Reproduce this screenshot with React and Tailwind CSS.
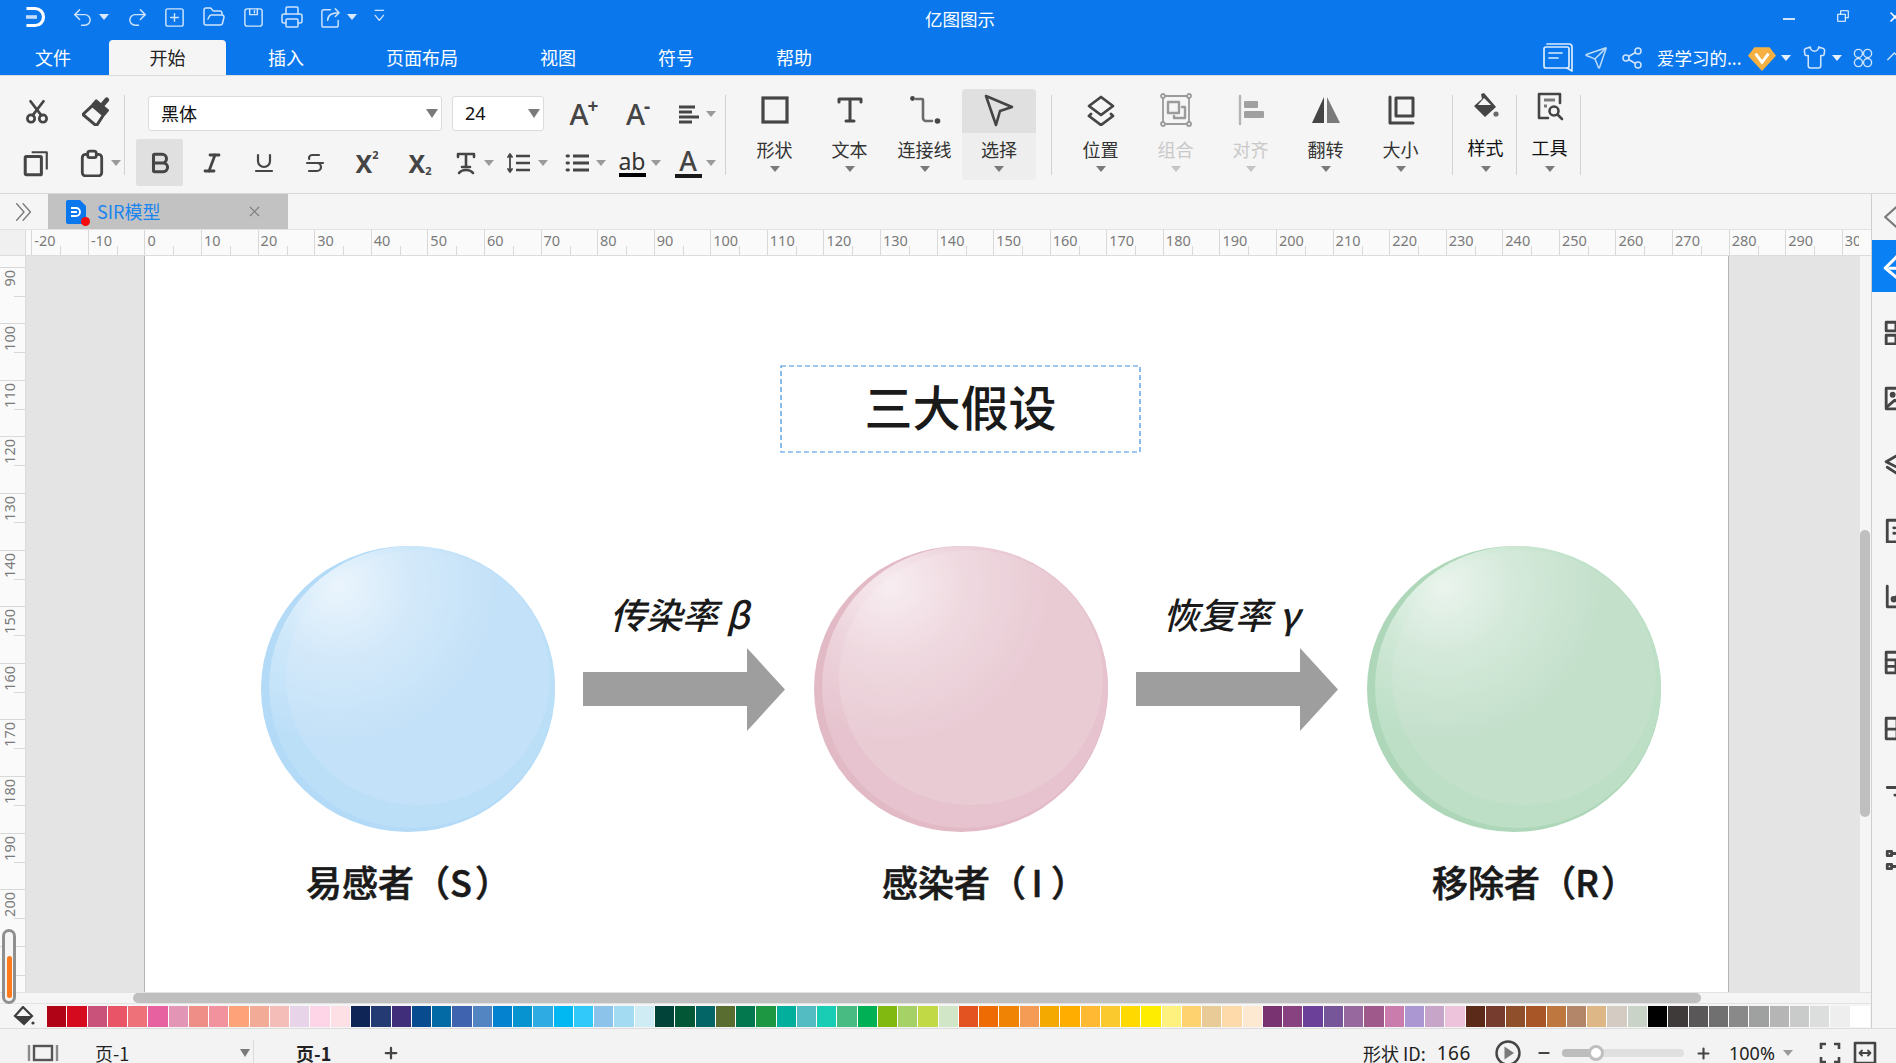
import React from "react";
import { Undo2, Redo2, SquarePlus, FolderOpen, Printer, Send, Share2, Shirt, Bold, Italic, Underline, Strikethrough, X, Plus, Minus } from "lucide-react";

const PALETTE = ["#b10316","#d60a1e","#c8527a","#e95566","#ee7078","#e761a0","#e295b5","#ef8e87","#f2929f","#fea27a","#f2ab96","#f5bdb8","#e8d4e8","#fdd5e6","#fce0e6","#0f2556","#233a72","#402e7a","#094b8f","#046aa5","#3f63ae","#5485c3","#0481cf","#0693d0","#2eabe2","#02b8f2","#31c9f9","#8bc3ea","#a2dbf2","#cfecf5","#024339","#025736","#036566","#586d2f","#03784e","#1e9743","#02ae9c","#52bcc2","#18cdb4","#47bb82","#00b054","#81b911","#a6d166","#c0d945","#d0e6c6","#e35321","#ed6b02","#f08204","#f49b55","#f3a900","#ffae00","#ffb932","#f9c92e","#ffd900","#ffed00","#fef17e","#fdd26f","#e9cb98","#fedaaa","#fde9d2","#7a3371","#87427f","#6a4098","#775599","#96689d","#9f5a8b","#ca7cad","#ab97d2","#c6a5c9","#ecc3db","#5c2a19","#763d2e","#8f4f2a","#a85627","#bd773f","#b38669","#ddb786","#d4cbc3","#c9d3c8","#000000","#3e3a39","#595757","#717071","#898989","#9fa0a0","#b5b5b5","#c9caca","#dcdddd","#eeeeef","#ffffff"];

const H_TICKS = [-20,-10,0,10,20,30,40,50,60,70,80,90,100,110,120,130,140,150,160,170,180,190,200,210,220,230,240,250,260,270,280,290,300];
const V_TICKS = [90,100,110,120,130,140,150,160,170,180,190,200,210];

const S = ({ children, w = 24, h = 24, vb = "0 0 24 24", c = "#454545", sw = 2, className = "" }) => (
  <svg width={w} height={h} viewBox={vb} fill="none" stroke={c} strokeWidth={sw} strokeLinecap="round" strokeLinejoin="round" className={`block shrink-0 ${className}`}>{children}</svg>
);

const Caret = ({ c = "#7a7a7a", className = "" }) => (
  <svg width="10" height="6" viewBox="0 0 10 6" className={`block shrink-0 ${className}`}><path d="M0 0h10L5 6z" fill={c} /></svg>
);

const Logo = () => (
  <S w={24} h={24} c="#fff" sw={3.2}><path d="M2.5 3.5h8.500a8.500 8.500 0 0 1 0 17H2.500" strokeLinecap="butt" /><path d="M2 12h11" strokeOpacity=".75" strokeWidth="3.6" strokeLinecap="butt" /></S>
);

function Big({ label, disabled, children, tall, active, w = "w-[75px]" }) {
  return (
    <div className={`${w} shrink-0 flex flex-col items-center ${tall ? "pl-[2px]" : ""}`}>
      <div className={`w-full h-[44px] flex items-center justify-center rounded-t-sm ${active ? "bg-[#e0e0e0]" : ""} ${tall ? "pb-[10px]" : "pb-[3px]"}`}>{children}</div>
      <div className={`w-full h-[47px] flex flex-col items-center rounded-b-sm ${active ? "bg-[#eeeeee]" : ""} ${tall ? "-mt-[8px]" : ""}`}>
        <div className={`${tall ? "mt-[10px] text-[#111111]" : "mt-[4px]"} h-[24px] leading-[24px] text-[18px] whitespace-nowrap ${disabled ? "text-[#c9c9c9]" : tall ? "" : "text-[#333333]"}`}>{label}</div>
        <div className={`${tall ? "mt-[7px]" : "mt-[5px]"}`}><Caret c={disabled ? "#c4c4c4" : "#7a7a7a"} /></div>
      </div>
    </div>
  );
}

const Sep = () => <div className="w-px h-[80px] mt-[19px] bg-[#d2d2d2] shrink-0" />;

function Sphere({ id, outer, mid, center, className }) {
  return (
    <svg viewBox="0 0 294 286" width="294" height="286" className={`absolute top-[290px] ${className}`}>
      <defs>
        <radialGradient id={id} cx="0.24" cy="0.14" r="0.56">
          <stop offset="0" stopColor="#ffffff" stopOpacity=".66" />
          <stop offset="0.45" stopColor="#ffffff" stopOpacity=".28" />
          <stop offset="1" stopColor="#ffffff" stopOpacity="0" />
        </radialGradient>
      </defs>
      <ellipse cx="147" cy="143" rx="147" ry="143" fill={outer} />
      <ellipse cx="151" cy="141" rx="143" ry="141" fill={mid} />
      <ellipse cx="157" cy="131.500" rx="132" ry="127.500" fill={center} />
      <ellipse cx="151" cy="141" rx="143" ry="141" fill={`url(#${id})`} />
    </svg>
  );
}

const Arrow = ({ className }) => (
  <svg viewBox="0 0 202 83" width="202" height="83" className={`absolute top-[392px] ${className}`}>
    <path d="M0 24h164V0l38 41.500L164 83V58H0z" fill="#9d9e9d" />
  </svg>
);

const SidebarIcon = ({ children }) => (
  <div className="h-[66px] flex items-center pl-[12px] overflow-hidden"><S w={26} h={26} sw={2.6}>{children}</S></div>
);

export default function App() {
  return (
    <div className="w-[1896px] h-[1063px] overflow-hidden flex flex-col bg-[#f5f5f5] font-['Noto_Sans_CJK_SC','Noto_Sans',sans-serif] text-[#222]">
      {/* title + menu */}
      <header className="h-[76px] shrink-0 bg-[#0a78ec] border-b border-[#dcdcdc] text-white">
        <div className="h-[40px] flex items-center">
          <div className="w-[924px] shrink-0 flex items-center pb-[6px]">
            <div className="ml-[24px]"><Logo /></div>
            <Undo2 size={23} strokeWidth={1.5} className="ml-[23px] text-[#cfe4fb]" />
            <Caret c="#d8e9fc" className="ml-[5px]" />
            <Redo2 size={23} strokeWidth={1.5} className="ml-[17px] text-[#cfe4fb]" />
            <SquarePlus size={23} strokeWidth={1.5} className="ml-[14px] text-[#cfe4fb]" />
            <FolderOpen size={24} strokeWidth={1.5} className="ml-[16px] text-[#cfe4fb]" />
            <div className="ml-[16px]"><S w={23} h={23} c="#cfe4fb" sw={1.5}><rect x="3" y="3" width="18" height="18" rx="2.500" /><path d="M8 3v6h8V3M13 5v2" /></S></div>
            <Printer size={24} strokeWidth={1.5} className="ml-[15px] text-[#cfe4fb]" />
            <div className="ml-[15px]"><S w={23} h={23} c="#cfe4fb" sw={1.5}><path d="M12 4H5a2 2 0 0 0-2 2v14a2 2 0 0 0 2 2h13a2 2 0 0 0 2-2v-5" /><path d="M9 15c0-5 4-8 12-8M17 3l4 4-4 4" /></S></div>
            <Caret c="#d8e9fc" className="ml-[5px]" />
            <div className="ml-[14px]"><S w={20} h={20} c="#cfe4fb" sw={1.6}><path d="M5 4h10M5 10l5 6 5-6" /></S></div>
          </div>
          <div className="w-[72px] shrink-0 text-[17.5px] leading-[24px] text-center whitespace-nowrap -mt-[2px]">亿图图示</div>
          <div className="ml-[787px] w-[12px] h-[2px] bg-[#cfe4fb] mt-[-2px] shrink-0" />
          <div className="ml-[41px] -mt-[9px]"><S w={14} h={14} c="#ffffff" sw={1.8}><rect x="3" y="9" width="13" height="12" /><path d="M8 9V3h13v12h-5" /></S></div>
          <X size={16} strokeWidth={2.4} className="ml-[37px] -mt-[7px] shrink-0" />
        </div>
        <nav className="h-[35px] flex items-center text-[18px] leading-[35px]">
          <div className="w-[109px] pr-[3px] text-center shrink-0">文件</div>
          <div className="w-[117px] h-[35px] bg-[#f5f5f5] text-[#222] text-center rounded-t-sm shrink-0">开始</div>
          <div className="w-[120px] text-center shrink-0">插入</div>
          <div className="w-[152px] text-center shrink-0">页面布局</div>
          <div className="w-[120px] text-center shrink-0">视图</div>
          <div className="w-[116px] text-center shrink-0">符号</div>
          <div className="w-[120px] text-center shrink-0">帮助</div>
          <div className="ml-[688px] shrink-0"><S w={31} h={30} c="#dcebfd" sw={1.7} vb="0 0 31 30"><path d="M2 6a2 2 0 0 1 2-2h21a2 2 0 0 1 2 2v17a2 2 0 0 1-2 2H4a2 2 0 0 1-2-2z" /><path d="M5 1h22a3 3 0 0 1 3 3v24l-5-3" /><path d="M7 10h13M7 15h9" /></S></div>
          <Send size={24} strokeWidth={1.5} className="ml-[11px] text-[#bcdafa] shrink-0" />
          <Share2 size={24} strokeWidth={1.5} className="ml-[12px] text-[#cfe4fb] shrink-0" />
          <div className="ml-[13px] w-[87px] shrink-0 whitespace-nowrap overflow-hidden text-[17.5px]">爱学习的...</div>
          <div className="ml-[4px] shrink-0">
            <svg width="28" height="28" viewBox="0 0 26 26" className="block"><path d="M6 3h14l6 8-13 14L0 11z" fill="#f5b041" /><path d="M7 9l6 8 6-8" fill="none" stroke="#fff" strokeWidth="2.600" /></svg>
          </div>
          <Caret c="#e4f0fd" className="ml-[5px]" />
          <Shirt size={25} strokeWidth={1.5} className="ml-[11px] text-[#cfe4fb] shrink-0" />
          <Caret c="#e4f0fd" className="ml-[5px]" />
          <div className="ml-[10px] shrink-0"><S w={22} h={24} c="#cfe4fb" sw={1.5}><circle cx="7" cy="7" r="4.400" /><circle cx="17" cy="7" r="4.400" /><circle cx="7" cy="17" r="4.400" /><circle cx="17" cy="17" r="4.400" /></S></div>
          <div className="ml-[12px] shrink-0"><S w={20} h={20} c="#cfe4fb" sw={1.6}><path d="M2 14l8-8 8 8" /></S></div>
        </nav>
      </header>

      {/* ribbon */}
      <section className="h-[118px] shrink-0 border-b border-[#d8d8d8] flex items-start">
        <div className="w-[124px] shrink-0 pt-[20px]">
          <div className="h-[35px] flex items-center pl-[22px] pb-[6px]">
            <div className="w-[30px] flex justify-center"><S w={26} h={26} sw={2.500}><circle cx="6.500" cy="19" r="3.400" /><circle cx="17.500" cy="19" r="3.400" /><path d="M8 16L18 3M16 16L6 3" /></S></div>
            <div className="ml-[30px] w-[30px] flex justify-center">
              <svg width="30" height="30" viewBox="0 0 28 28" className="block">
                <g transform="rotate(40 14 14)">
                  <rect x="12" y="-2" width="4.500" height="9" rx="2" fill="#454545" />
                  <rect x="6" y="6" width="16.500" height="7" rx="1" fill="#454545" />
                  <path d="M7.500 13h13.500l1.500 12H6z" fill="#f5f5f5" stroke="#454545" strokeWidth="2.800" strokeLinejoin="round" />
                </g>
              </svg>
            </div>
          </div>
          <div className="mt-[8px] h-[47px] flex items-center pl-[21px]">
            <div className="w-[30px] flex justify-center"><S w={26} h={28} sw={2.800} vb="0 0 24 26"><rect x="2" y="7" width="15" height="17" rx="1" /><path d="M8 3h14v16" strokeWidth="2" strokeLinecap="butt" /></S></div>
            <div className="ml-[26px] w-[30px] flex justify-center"><S w={26} h={28} sw={2.600} vb="0 0 24 26"><rect x="3" y="5" width="18" height="20" rx="3" /><rect x="8" y="2" width="8" height="6" rx="2" fill="#f5f5f5" /></S></div>
            <Caret c="#9a9a9a" className="ml-[4px]" />
          </div>
        </div>
        <Sep />
        <div className="w-[600px] shrink-0 pt-[20px]">
          <div className="h-[35px] flex items-center">
            <div className="ml-[23px] w-[294px] h-[35px] bg-white border border-[#dcdcdc] rounded-[3px] flex items-center justify-between pl-[12px] pr-[3px] shrink-0">
              <span className="text-[18px] text-[#111]">黑体</span><svg width="12" height="9" viewBox="0 0 12 9" className="block"><path d="M0 0h12L6 9z" fill="#7a7a7a" /></svg>
            </div>
            <div className="ml-[10px] w-[92px] h-[35px] bg-white border border-[#dcdcdc] rounded-[3px] flex items-center justify-between pl-[12px] pr-[3px] shrink-0">
              <span className="text-[18px] text-[#111] font-['Noto_Sans',sans-serif]">24</span><svg width="12" height="9" viewBox="0 0 12 9" className="block"><path d="M0 0h12L6 9z" fill="#7a7a7a" /></svg>
            </div>
            <div className="ml-[20px] w-[40px] flex justify-center items-start text-[#454545] font-['Noto_Sans',sans-serif] font-medium"><span className="text-[29px] leading-[34px]">A</span><span className="text-[19px] leading-[18px] font-bold -ml-[1px]">+</span></div>
            <div className="ml-[14px] w-[40px] flex justify-center items-start text-[#454545] font-['Noto_Sans',sans-serif] font-medium"><span className="text-[29px] leading-[34px]">A</span><span className="text-[19px] leading-[18px] font-bold -ml-[1px]">-</span></div>
            <div className="ml-[17px]"><S w={26} h={24} sw={3}><path d="M3 5h16M3 10h13M3 15h20M3 20h13" strokeLinecap="butt" /></S></div>
            <Caret c="#9a9a9a" className="ml-[5px]" />
          </div>
          <div className="mt-[8px] h-[47px] flex items-center">
            <div className="ml-[11px] w-[47px] h-[47px] bg-[#e0e0e0] rounded-[2px] flex items-center justify-center shrink-0"><Bold size={26} strokeWidth={2.8} className="text-[#454545]" /></div>
            <div className="ml-[3px] w-[52px] flex justify-center"><Italic size={24} strokeWidth={2.8} className="text-[#454545]" /></div>
            <div className="w-[52px] flex justify-center"><Underline size={24} strokeWidth={2.2} className="text-[#454545]" /></div>
            <div className="w-[50px] flex justify-center"><Strikethrough size={24} strokeWidth={2.2} className="text-[#454545]" /></div>
            <div className="ml-[1px] w-[52px] flex justify-center items-start text-[#454545] font-['Noto_Sans',sans-serif] font-bold"><span className="text-[25px] leading-[30px]">X</span><span className="text-[11px] leading-[14px]">2</span></div>
            <div className="ml-[1px] w-[52px] flex justify-center items-end text-[#454545] font-['Noto_Sans',sans-serif] font-bold"><span className="text-[25px] leading-[30px]">X</span><span className="text-[11px] leading-[14px]">2</span></div>
            <div className="ml-[8px]"><S w={24} h={24} sw={2.6}><path d="M4 6V3h16v3M12 3v13M8 16h8M5 22c3-4 11-4 14 0" /></S></div>
            <Caret c="#9a9a9a" className="ml-[6px]" />
            <div className="ml-[12px]"><S w={26} h={24} sw={2.6} vb="0 0 26 24"><path d="M10 5h14M10 12h14M10 19h14" strokeLinecap="butt" /><path d="M4 4v16M2 6l2-3 2 3M2 18l2 3 2-3" strokeWidth="1.8" /></S></div>
            <Caret c="#9a9a9a" className="ml-[6px]" />
            <div className="ml-[17px]"><S w={26} h={24} sw={2.8} vb="0 0 26 24"><path d="M8 5h16M8 12h16M8 19h16" strokeLinecap="butt" /><path d="M2 5h1.500M2 12h1.500M2 19h1.500" /></S></div>
            <Caret c="#9a9a9a" className="ml-[5px]" />
            <div className="ml-[11px] w-[30px] flex flex-col items-center text-[#333] font-['Noto_Sans',sans-serif]"><span className="text-[23px] leading-[24px]">ab</span><span className="w-[27px] h-[4px] bg-black" /></div>
            <Caret c="#9a9a9a" className="ml-[4px]" />
            <div className="ml-[13px] w-[28px] flex flex-col items-center text-[#454545] font-['Noto_Sans',sans-serif]"><span className="text-[27px] leading-[26px] font-medium">A</span><span className="w-[27px] h-[4px] bg-[#1a1a1a]" /></div>
            <Caret c="#9a9a9a" className="ml-[4px]" />
          </div>
        </div>
        <Sep />
        <div className="flex pt-[13px] ml-[11px]">
          <Big label="形状"><S w={30} h={30} sw={3.2} vb="0 0 30 30"><rect x="3" y="3" width="24" height="24" strokeLinejoin="miter" /></S></Big>
          <Big label="文本"><S w={28} h={30} sw={3} vb="0 0 28 30"><path d="M3 7V4h22v3M14 4v22M10 26h8" /></S></Big>
          <Big label="连接线"><S w={32} h={30} sw={2.6} vb="0 0 32 30"><circle cx="3.500" cy="3.500" r="2.400" fill="#454545" stroke="none" /><circle cx="28.500" cy="26" r="2.800" fill="#454545" stroke="none" /><path d="M7 4h6a1 1 0 0 1 1 1v18a3 3 0 0 0 3 3h6" stroke="#6b6b6b" /></S></Big>
          <Big label="选择" active w="w-[74px]"><S w={30} h={34} sw={2.6} vb="0 0 30 34"><path d="M2 3l26 11-12 4-4 14z" /></S></Big>
        </div>
        <div className="ml-[15px] shrink-0 flex"><Sep /></div>
        <div className="flex pt-[13px] ml-[11px]">
          <Big label="位置"><S w={32} h={32} sw={2.8} vb="0 0 32 32"><path d="M16 3l12 9-12 9-12-9z" /><path d="M6 20l-2 2 12 9 12-9-2-2" /></S></Big>
          <Big label="组合" disabled><S w={32} h={34} sw={1.8} c="#9b9b9b" vb="0 0 32 34"><rect x="3" y="3" width="26" height="28" /><circle cx="3" cy="3" r="2" fill="#f5f5f5" /><circle cx="29" cy="3" r="2" fill="#f5f5f5" /><circle cx="3" cy="31" r="2" fill="#f5f5f5" /><circle cx="29" cy="31" r="2" fill="#f5f5f5" /><rect x="8" y="9" width="11" height="11" strokeWidth="2.400" /><path d="M22 14h3v11H14v-2" strokeWidth="2.400" /></S></Big>
          <Big label="对齐" disabled><S w={28} h={32} c="#b5b5b5" vb="0 0 28 32" sw={2.4}><path d="M3 2v28" /><rect x="7" y="7" width="14" height="7" fill="#a0a0a0" stroke="none" rx="1" /><rect x="7" y="17" width="20" height="7" fill="#a0a0a0" stroke="none" rx="1" /></S></Big>
          <Big label="翻转"><svg width="30" height="30" viewBox="0 0 30 30" className="block"><path d="M13 2v26H1z" fill="#454545" /><path d="M16 2l13 26H16z" fill="#7a7a7a" /></svg></Big>
          <Big label="大小"><S w={28} h={30} sw={3} vb="0 0 28 30"><path d="M3 2v26h23" /><rect x="9" y="3" width="17" height="18" /></S></Big>
        </div>
        <div className="ml-[14px] shrink-0 flex"><Sep /></div>
        <div className="flex pt-[13px]">
          <Big label="样式" tall w="w-[63px]"><svg width="26" height="26" viewBox="0 0 26 26" className="block"><path d="M8 1l3-1 12 14-11 10L1 13 9 6z" fill="#454545" /><path d="M6 13h13l-7 7z" fill="#454545" /><path d="M5 12L11 5l7 7z" fill="#f5f5f5" /><circle cx="23" cy="21" r="2.600" fill="#6b6b6b" /></svg></Big>
        </div>
        <Sep />
        <div className="flex pt-[13px]">
          <Big label="工具" tall w="w-[63px]"><S w={28} h={30} sw={2.6} vb="0 0 28 30"><path d="M24 12V3H3v24h9" /><path d="M8 9h11" stroke="#7a7a7a" strokeWidth="3" strokeLinecap="butt" /><path d="M8 15h3" stroke="#7a7a7a" strokeWidth="3" strokeLinecap="butt" /><circle cx="18" cy="20" r="4.500" /><path d="M22 24l4 4" /></S></Big>
        </div>
        <Sep />
      </section>

      {/* main */}
      <main className="flex-1 min-h-0 flex">
        <div className="w-[1871px] shrink-0 flex flex-col relative">
          <div className="h-[36px] shrink-0 flex items-stretch border-b border-[#e2e2e2]">
            <div className="w-[48px] flex items-center justify-center"><S w={22} h={22} c="#7c7c7c" sw={1.5}><path d="M4 3l8 9-8 9M11 3l8 9-8 9" /></S></div>
            <div className="w-[240px] bg-[#c2c2c2] flex items-center">
              <div className="ml-[18px] relative w-[20px] h-[24px] shrink-0">
                <svg width="20" height="24" viewBox="0 0 20 24" className="block"><path d="M2 0h12l6 6v16a2 2 0 0 1-2 2H2a2 2 0 0 1-2-2V2a2 2 0 0 1 2-2z" fill="#0a78ec" /><path d="M5 8h5a4 4 0 0 1 0 8H5M5 12h6" fill="none" stroke="#fff" strokeWidth="1.8" /></svg>
                <span className="absolute -right-[4px] bottom-[-2px] w-[9px] h-[9px] rounded-full bg-[#f50b0b]" />
              </div>
              <span className="ml-[11px] text-[18px] text-[#1a84f0] whitespace-nowrap">SIR模型</span>
              <X size={17} strokeWidth={1.5} className="ml-[86px] text-[#7d7d7d]" />
            </div>
          </div>
          <div className="h-[26px] shrink-0 flex bg-[#fafafa] border-b border-[#dcdcdc] overflow-hidden">
            <div className="w-[26px] shrink-0 bg-[#f0f0f0] border-r border-[#dcdcdc]" />
            <div className="w-[5.3px] shrink-0" />
            <div className="w-[1828px] flex overflow-hidden">
              {H_TICKS.map((t) => (
                <div key={t} className="w-[56.58px] shrink-0 relative border-l border-[#d8d8d8] overflow-hidden pl-[2px] text-[14.5px] leading-[20px] text-[#7a7a7a] font-['Noto_Sans',sans-serif]">
                  {t}
                  <span className="absolute left-[28px] bottom-0 w-px h-[9px] bg-[#d8d8d8]" />
                </div>
              ))}
            </div>
          </div>
          <div className="flex-1 min-h-0 flex">
            <div className="w-[26px] shrink-0 bg-[#fafafa] border-r border-[#dcdcdc] overflow-hidden">
              <div className="h-[10.7px]" />
              {V_TICKS.map((t) => (
                <div key={t} className="h-[56.6px] relative border-t border-[#d8d8d8]">
                  <span className="absolute left-[2px] top-[2px] [writing-mode:vertical-rl] rotate-180 text-[14.5px] leading-[14px] text-[#7a7a7a] font-['Noto_Sans',sans-serif]">{t}</span>
                  <span className="absolute right-0 top-[28px] w-[11px] h-px bg-[#d8d8d8]" />
                </div>
              ))}
            </div>
            <div className="w-[119px] shrink-0 bg-[#e4e4e4] border-r border-[#b4b4b4]" />
            <div className="w-[1584px] shrink-0 bg-white relative border-r border-[#b4b4b4] text-[#1a1a1a]">
              <div className="absolute left-[635px] top-[109px] w-[361px] h-[88px] flex items-center justify-center text-[48px] leading-none font-medium pb-[8px]">
                <svg width="361" height="88" viewBox="0 0 361 88" className="absolute inset-0"><rect x="1" y="1" width="359" height="86" fill="none" stroke="#4090e0" strokeWidth="1.200" strokeDasharray="5 3" /></svg>
                <span className="relative">三大假设</span>
              </div>
              <Sphere id="gb" outer="#b3daf7" mid="#bcdff8" center="#c3e1f8" className="left-[116px]" />
              <Sphere id="gp" outer="#e2bac6" mid="#e6c3ce" center="#e9cbd4" className="left-[669px]" />
              <Sphere id="gg" outer="#aed7b9" mid="#bcdfc6" center="#c3e0cb" className="left-[1222px]" />
              <Arrow className="left-[438px]" />
              <Arrow className="left-[991px]" />
              <div className="absolute left-[465px] top-[331px] text-[36px] leading-[52px] italic font-medium whitespace-nowrap">传染率 β</div>
              <div className="absolute left-[1018px] top-[331px] text-[36px] leading-[52px] italic font-medium whitespace-nowrap">恢复率 γ</div>
              <div className="absolute left-[161px] top-[599px] text-[36px] leading-[52px] font-medium [-webkit-text-stroke:0.6px_#1a1a1a] whitespace-nowrap">易感者（<span className="inline-block w-[28px] -ml-[3px] text-center">S</span>）</div>
              <div className="absolute left-[737px] top-[599px] text-[36px] leading-[52px] font-medium [-webkit-text-stroke:0.6px_#1a1a1a] whitespace-nowrap">感染者（<span className="inline-block w-[28px] -ml-[3px] text-center">I</span>）</div>
              <div className="absolute left-[1287px] top-[599px] text-[36px] leading-[52px] font-medium [-webkit-text-stroke:0.6px_#1a1a1a] whitespace-nowrap">移除者（<span className="inline-block w-[28px] -ml-[3px] text-center">R</span>）</div>
            </div>
            <div className="w-[131px] shrink-0 bg-[#e4e4e4]" />
            <div className="w-[11px] shrink-0 bg-[#f5f5f5] relative">
              <div className="absolute left-0 top-[274px] w-[10px] h-[287px] rounded-[5px] bg-[#bfbfbf]" />
            </div>
          </div>
          <div className="h-[12px] shrink-0 bg-[#f5f5f5] border-y border-[#e2e2e2] relative">
            <div className="absolute left-[133px] top-0 w-[1568px] h-[10px] rounded-[5px] bg-[#bfbfbf]" />
          </div>
          <div className="h-[24px] shrink-0 flex items-center">
            <div className="w-[47px] shrink-0 flex justify-center">
              <svg width="22" height="20" viewBox="0 0 22 20" className="block"><path d="M10 1l9 9-8 8-9-8z" fill="#f5f5f5" stroke="#3d3d3d" strokeWidth="2.200" /><path d="M2 10h17l-8 8z" fill="#3d3d3d" /><circle cx="20" cy="17" r="1.600" fill="#3d3d3d" /></svg>
            </div>
            <div className="w-[1823px] h-[21px] flex gap-px bg-white">
              {PALETTE.map((c, i) => (
                <div key={i} className="flex-1" style={{ backgroundColor: c }} />
              ))}
            </div>
          </div>
          {/* thermometer overlay */}
          <div className="absolute left-[2px] top-[735px] w-[14px] h-[75px] rounded-full border-[3px] border-[#8f8f8f] bg-[#f5f5f5] overflow-hidden flex flex-col justify-end items-center">
            <div className="w-[5px] h-[42px] bg-[#ff7a1c] rounded-full mb-[3px]" />
          </div>
        </div>
        <aside className="w-[25px] shrink-0 border-l border-[#cfcfcf] flex flex-col overflow-hidden">
          <div className="h-[46px] flex items-center pl-[11px]"><S w={26} h={30} c="#7a7a7a" sw={2}><path d="M12 3L2 12l10 9" /></S></div>
          <div className="h-[52px] bg-[#0a80f5] flex items-center pl-[10px]"><S w={26} h={30} c="#fff" sw={2.8}><path d="M14 3L3 14l11 9" /><path d="M14 3l7 5M7 14h10" /></S></div>
          <div className="h-[7px]" />
          <SidebarIcon><rect x="2" y="3" width="9" height="8" /><rect x="2" y="15" width="9" height="8" /><rect x="15" y="3" width="9" height="8" /></SidebarIcon>
          <SidebarIcon><rect x="2" y="3" width="20" height="19" /><circle cx="8" cy="9" r="1.400" /><path d="M3 20l7-6 11 6" /></SidebarIcon>
          <SidebarIcon><path d="M14 3L2 10l12 6" /><path d="M3 15l11 7" /></SidebarIcon>
          <SidebarIcon><rect x="3" y="3" width="20" height="20" /><path d="M9 10h1M14 10h1M9 15h1M14 15h1" /></SidebarIcon>
          <SidebarIcon><path d="M3 3v19h20" /><circle cx="9" cy="15" r="1.600" /><path d="M10 14l7-7" /></SidebarIcon>
          <SidebarIcon><rect x="2" y="3" width="20" height="19" /><path d="M2 10h20M2 16h20M11 10v12" /></SidebarIcon>
          <SidebarIcon><rect x="2" y="3" width="20" height="19" /><path d="M2 13h10M12 3v19M12 8h10" /></SidebarIcon>
          <SidebarIcon><path d="M3 6h22M10 13h14M20 20h3" /></SidebarIcon>
          <SidebarIcon><path d="M7 4H3v4h4zM7 20H3v-4h4zM7 6h6a2 2 0 0 1 2 2v8a2 2 0 0 1-2 2H7" /></SidebarIcon>
        </aside>
      </main>

      {/* status */}
      <footer className="h-[35px] shrink-0 border-t border-[#dcdcdc] bg-[#f3f3f3] overflow-hidden">
        <div className="h-[48px] flex items-center pr-[19px] text-[18px] text-[#222]">
          <div className="ml-[27px]"><S w={32} h={20} vb="0 0 32 20" sw={2.4} c="#555"><path d="M2 2v16M30 2v16" strokeLinecap="butt" stroke="#8a8a8a" /><rect x="7" y="3" width="18" height="14" strokeLinejoin="miter" /></S></div>
          <span className="ml-[36px] w-[35px] whitespace-nowrap">页-1</span>
          <svg width="10" height="8" viewBox="0 0 10 8" className="ml-[110px] block shrink-0"><path d="M0 0h10L5 8z" fill="#7a7a7a" /></svg>
          <span className="ml-[3px] w-px h-[38px] bg-[#dcdcdc] mt-[12px] shrink-0" />
          <span className="ml-[42px] w-[34px] whitespace-nowrap font-bold">页-1</span>
          <Plus size={18} strokeWidth={3} className="ml-[52px] text-[#454545] shrink-0" />
          <span className="ml-auto w-[114px] whitespace-pre flex items-center">形状 ID:<span className="ml-[11px] text-[19px] tracking-[0.5px] font-['Noto_Sans',sans-serif]">166</span></span>
          <div className="ml-[18px]"><svg width="26" height="26" viewBox="0 0 26 26" className="block"><circle cx="13" cy="13" r="11.500" fill="none" stroke="#454545" strokeWidth="2.400" /><path d="M9.500 6.500L19 13l-9.500 6.500z" fill="#7a7a7a" /></svg></div>
          <Minus size={16} strokeWidth={3} className="ml-[15px] text-[#454545] shrink-0" />
          <div className="ml-[10px] w-[122px] h-[8px] bg-[#e0e0e0] rounded-full relative shrink-0">
            <div className="w-[32px] h-[8px] bg-[#bdbdbd] rounded-l-full" />
            <div className="absolute left-[26px] top-[-4px] w-[16px] h-[16px] rounded-full bg-white border-[3px] border-[#bfbfbf]" />
          </div>
          <Plus size={17} strokeWidth={3} className="ml-[11px] text-[#454545] shrink-0" />
          <span className="ml-[17px] w-[48px] whitespace-nowrap font-['Noto_Sans',sans-serif]">100%</span>
          <Caret c="#9a9a9a" className="ml-[6px]" />
          <div className="ml-[26px]"><S w={22} h={22} sw={2.6} vb="0 0 22 22"><path d="M2 7V2h5M15 2h5v5M2 15v5h5M15 20h5v-5" strokeLinecap="butt" strokeLinejoin="miter" /></S></div>
          <div className="ml-[12px]"><S w={24} h={24} sw={2.6}><rect x="2" y="2" width="20" height="20" /><path d="M7 12h10M9 9.500L6.500 12 9 14.500M15 9.500l2.500 2.500-2.500 2.500" strokeWidth="1.8" /></S></div>
        </div>
      </footer>
    </div>
  );
}
